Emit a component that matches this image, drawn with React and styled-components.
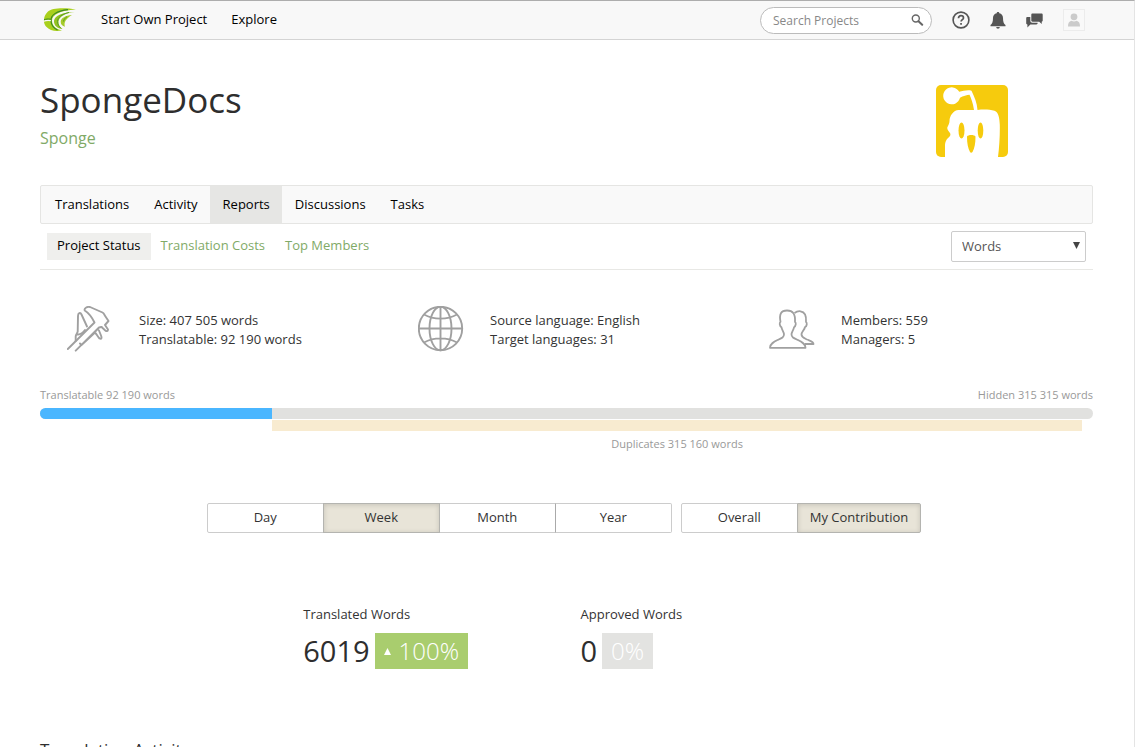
import React, { useState } from 'react'
import styled, { createGlobalStyle } from 'styled-components'

const GlobalStyle = createGlobalStyle`
  * {
    box-sizing: border-box;
  }
  html {
    scrollbar-width: none;
  }
  body {
    margin: 0;
    background: #fff;
    color: #333;
    font-family: "Open Sans", "Noto Sans", sans-serif;
    font-size: 13px;
    line-height: 19px;
  }
  button, input, select {
    font-family: inherit;
  }
  a {
    text-decoration: none;
  }
`

const Page = styled.div`
  border-top: 1px solid #adadad;
  border-right: 1px solid #e4e4e4;
`

const Header = styled.header`
  display: flex;
  align-items: center;
  height: 39px;
  padding: 0 49px 0 43px;
  background: #f8f8f8;
  border-bottom: 1px solid #d4d4d4;
`

const LogoLink = styled.a`
  display: flex;
  margin-right: 25px;
`

const MainNav = styled.nav`
  display: flex;
  flex: 1;
  gap: 24px;
  padding-bottom: 2px;
`

const NavLink = styled.a`
  color: #000;
`

const HeaderTools = styled.div`
  display: flex;
  align-items: center;
  gap: 20px;
`

const SearchBox = styled.form`
  display: flex;
  align-items: center;
  width: 172px;
  height: 27px;
  padding: 0 7px 0 12px;
  background: #fff;
  border: 1px solid #bbb;
  border-radius: 14px;
`

const SearchInput = styled.input`
  flex: 1;
  min-width: 0;
  padding: 0;
  border: 0;
  outline: 0;
  background: none;
  color: #333;
  font-size: 12px;

  &::placeholder {
    color: #888;
  }
`

const IconButton = styled.button`
  display: flex;
  padding: 0;
  border: 0;
  background: none;
  cursor: pointer;
`

const Avatar = styled.button`
  display: flex;
  align-items: center;
  justify-content: center;
  width: 22px;
  height: 22px;
  padding: 0;
  background: #f9f9f9;
  border: 1px solid #ececec;
`

const Main = styled.main`
  padding: 40px 41px 0 40px;
`

const ProjectHead = styled.div`
  display: flex;
  justify-content: space-between;
  align-items: flex-start;
  padding: 5px 85px 28px 0;
`

const ProjectTitle = styled.h1`
  margin: 0;
  padding-top: 2px;
  color: #2e2e2e;
  font-size: 35px;
  font-weight: 500;
  line-height: 26px;
`

const OwnerLink = styled.a`
  display: block;
  padding-top: 13px;
  color: #81aa67;
  font-size: 16px;
  line-height: 24px;
`

const Tabs = styled.nav`
  display: flex;
  height: 39px;
  padding-left: 1px;
  background: #f9f9f9;
  border: 1px solid #e5e5e3;
  border-radius: 2px;
`

const Tab = styled.a`
  padding: 9px 12px 0 13px;
  color: #000;
  background: ${props => (props.$active ? '#e6e6e4' : 'transparent')};
`

const SubBar = styled.div`
  display: flex;
  align-items: center;
  justify-content: space-between;
  height: 46px;
  padding: 0 7px;
  border-bottom: 1px solid #e8e8e5;
`

const SubNav = styled.nav`
  display: flex;
`

const SubLink = styled.a`
  padding: 3px 10px 5px;
  color: ${props => (props.$active ? '#000' : '#81aa67')};
  background: ${props => (props.$active ? '#efefed' : 'transparent')};
`

const SelectWrap = styled.div`
  position: relative;

  svg {
    position: absolute;
    right: 6px;
    top: 11px;
    pointer-events: none;
  }
`

const UnitSelect = styled.select`
  display: block;
  width: 135px;
  height: 31px;
  padding: 0 10px 2px;
  appearance: none;
  background: #fff;
  border: 1px solid #ccc;
  border-radius: 2px;
  color: #555;
  font-size: 13px;
`

const Facts = styled.section`
  display: grid;
  grid-template-columns: repeat(3, 1fr);
  padding-top: 36px;
`

const Fact = styled.div`
  display: flex;
  align-items: center;
  gap: 26px;
  padding-left: 27px;
`

const FactText = styled.div`
  padding-top: 2px;
`

const BarLabels = styled.div`
  display: flex;
  justify-content: space-between;
  padding-top: 35px;
  color: #999;
  font-size: 11px;
  line-height: 16px;
`

const Track = styled.div`
  height: 11px;
  margin-top: 5px;
  overflow: hidden;
  background: #e1e1df;
  border-radius: 6px;
`

const Fill = styled.div`
  height: 100%;
  background: #4ab6ff;
`

const Duplicates = styled.div`
  margin-top: 1px;
  color: #999;
  font-size: 11px;
  line-height: 16px;
  text-align: center;
`

const DuplicatesBar = styled.div`
  height: 11px;
  margin-bottom: 5px;
  background: #f8ebd0;
`

const Toggles = styled.div`
  display: flex;
  justify-content: center;
  gap: 9px;
  padding: 51px 5px 72px 0;
`

const ToggleGroup = styled.div`
  display: flex;
`

const Toggle = styled.button`
  min-width: 117px;
  height: 30px;
  padding: 0 12px 2px;
  border: 1px solid #ccc;
  background: #fff;
  color: #333;
  font-size: 13px;
  cursor: pointer;

  & + & {
    margin-left: -1px;
    border-left-color: #aaa;
  }
  &:first-child {
    border-radius: 2px 0 0 2px;
  }
  &:last-child {
    border-radius: 0 2px 2px 0;
  }
  &[aria-pressed='true'] {
    z-index: 1;
    background: #e8e4d8;
    border-color: #b4b4b0;
    box-shadow: inset 0 1px 5px rgba(0, 0, 0, 0.15);
  }
`

const Metrics = styled.section`
  display: grid;
  grid-template-columns: 1fr 1fr;
  gap: 28px;
  padding: 0 25%;
`

const MetricLabel = styled.div`
  padding-bottom: 9px;
`

const MetricRow = styled.div`
  display: flex;
  align-items: center;
  gap: 5px;
  color: #2e2e2e;
  font-size: 29px;
  line-height: 36px;
`

const Percent = styled.span`
  display: flex;
  align-items: center;
  gap: 8px;
  height: 36px;
  padding: 0 9px;
  background: ${props => (props.$up ? '#a9cd6e' : '#e3e3e1')};
  color: #fff;
  font-size: 24px;
  font-weight: 300;
`

const SectionTitle = styled.h2`
  margin: 0;
  padding-top: 68px;
  color: #2e2e2e;
  font-size: 17px;
  font-weight: 400;
  line-height: 26px;
`

const Logo = () => (
  <svg width="33" height="24" viewBox="0 0 33 24">
    <path d="M33 1.500C22-.4 9-.4 4.500 4 0 8.500 0 15 3 18.500c4 4.600 10 5 16 4-6.500-1.500-10-5-10-10C9 6.500 17 2.500 33 1.500Z" fill="#a9d01c" />
    <path d="M31.500 4C20 4 11.500 7.500 11 13c-.3 4.500 3.500 7.500 8.500 8-3-2.200-4.300-4.700-4-7.500C16 9 22 5 31.500 4Z" fill="#93c120" />
    <path d="M29 7c-6.500.5-11 3-11.300 6.500-.2 2.800 1.800 4.800 4.300 5.200-1.500-4.200 1-8.200 7-11.700Z" fill="#a5cb2a" />
    <path d="M8 13C7.500 7 14 2.800 25 1.600M8 13c.3 4 2.500 7 6.500 9" fill="none" stroke="#3c8a24" strokeWidth="1.200" />
    <path d="M14.500 13.500C14.500 9.500 19 6 26 4.400M14.500 13.500c0 2.800 1.500 5 3.500 6.800M20.500 13.500c.2-2 1.500-3.500 3.500-4.800" fill="none" stroke="#5a9f26" strokeWidth="1" />
    <path d="M.8 13.200c2-.8 4.500-1 7-.6" fill="none" stroke="#f8f8f8" strokeWidth="1.400" />
    <path d="M1 11.800c2-.8 4-1 6.500-.6" fill="none" stroke="#3c8a24" strokeWidth="1" />
  </svg>
)

const SearchIcon = () => (
  <svg width="13" height="12" viewBox="0 0 13 12" fill="none" stroke="#666">
    <circle cx="4.800" cy="4.500" r="3.500" strokeWidth="1.400" />
    <path d="m7.500 7.200 3.700 3.500" strokeWidth="2" strokeLinecap="round" />
  </svg>
)

const HelpIcon = () => (
  <svg width="18" height="18" viewBox="0 0 18 18" fill="none" stroke="#555">
    <circle cx="9" cy="9" r="7.900" strokeWidth="1.600" />
    <path d="M6.500 7.200C6.500 5.600 7.500 4.700 9 4.700s2.500.9 2.500 2.200c0 1.800-2.400 1.800-2.400 3.700" strokeWidth="1.700" />
    <path d="M8.200 12h1.700v1.700H8.200z" fill="#555" stroke="none" />
  </svg>
)

const BellIcon = () => (
  <svg width="16" height="17" viewBox="0 0 16 17" fill="#555">
    <path d="M8 0c-.8 0-1.300.5-1.300 1.200C4.300 1.700 3 3.500 3 6c0 4-.8 5.600-2.500 7v1.200h15V13C13.800 11.600 13 10 13 6c0-2.500-1.300-4.300-3.700-4.800C9.300.5 8.800 0 8 0ZM6.200 15a1.800 1.800 0 0 0 3.600 0Z" />
  </svg>
)

const ChatIcon = () => (
  <svg width="17" height="15" viewBox="0 0 17 15" fill="#555">
    <path d="M6.500.4h9c.7 0 1.200.5 1.200 1.200v6c0 .7-.4 1.200-1 1.200l.1 2.200-2.600-2.200H6.500c-.7 0-1.200-.5-1.200-1.200v-6C5.300.9 5.800.4 6.500.4Z" />
    <path d="M4.300 4H1.400C.7 4 .2 4.500.2 5.200v5c0 .7.5 1.200 1.200 1.200v3l3-3h6c.7 0 1.200-.5 1.200-1.200v-.4H6.300c-1.200 0-2-.8-2-2Z" />
  </svg>
)

const PersonIcon = () => (
  <svg width="14" height="14" viewBox="0 0 14 14" fill="#cbcbcb">
    <circle cx="7" cy="3.800" r="3.400" />
    <path d="M1 13.500c0-3.500 1-5 3.500-5.700 1.500.9 3.500.9 5 0 2.500.7 3.500 2.200 3.500 5.700Z" />
  </svg>
)

const ProjectLogo = () => (
  <svg width="72" height="72" viewBox="0 0 72 72" role="img" aria-label="Sponge">
    <rect width="72" height="72" rx="5" fill="#f6cb0d" />
    <path d="M9 72V60c.2-3 1-5 3-7 2-1.500 3-3 2-5-1-2-3.500-3.500-2.500-6 1-2 2-4 2-6 0-5 4-11 9-11h15.500C37 18 35 13 33.500 9.800 31 10 27 11 24 12.800a8.500 8.500 0 1 1-.8-6C27 6 32 4.500 35.500 5.800 38.500 12 41 18 41.500 25c6-.8 12-.6 17 .8 4 1.200 5 7.200 5.300 14.200.2 10-.5 22-1.800 32Z" fill="#fff" />
    <ellipse cx="25.500" cy="45.500" rx="3" ry="8" fill="#f6cb0d" />
    <ellipse cx="44.500" cy="45.500" rx="2.800" ry="8" fill="#f6cb0d" />
    <path d="M31 51.500c1-2 7.500-2 8.500 0 0 7-1 12-3 15.500-.7 1-2 1-2.500 0-2-3.500-3-8.500-3-15.500Z" fill="#f6cb0d" />
  </svg>
)

const CaliperIcon = () => (
  <svg width="46" height="46" viewBox="0 0 46 46" fill="none" stroke="#a0a0a0" strokeWidth="1.900" strokeLinejoin="round" strokeLinecap="round">
    <path d="M.8 43 27.500 16.500C25 11.500 21 6.500 17.800 4.500c-1-2.300 2.200-4 5.200-3.500l12.500 5.500c1.500.8 2 2.500 3 4l3 4.500-3.500 4 3 4.500c0 2-1.500 2-2.700 1l-3.800-3.500" />
    <path d="M8.700 44.700 32 21.500l2.500-.5M14.500 39 31 22.800M14.500 39l-1.500-1.500M14.500 39l13.500-12.500c1.500 1.500 2.500 4 4.500 6 2 1 2.500-.5 1.500-3l-2-5" />
    <path d="M8.700 35v-4.500c0-2 1.500-2.700 2-5l.3-15.500c0-3 2.300-4 3.500-1.500L20 20.500" />
    <path d="M10.500 28.500c3 .3 5-1 7.500-4.500" />
  </svg>
)

const GlobeIcon = () => (
  <svg width="46" height="46" viewBox="0 0 46 46" fill="none" stroke="#a0a0a0" strokeWidth="1.900">
    <circle cx="22.500" cy="22.500" r="21.700" />
    <ellipse cx="22.500" cy="22.500" rx="11" ry="21.700" />
    <path d="M22.500 1v43M1 22.500h43M6 8.500c9.500 5.500 23.500 5.500 33 0M6 36.500c9.500-5.500 23.500-5.500 33 0" />
  </svg>
)

const MembersIcon = () => (
  <svg width="46" height="46" viewBox="0 0 46 46" fill="none" stroke="#a0a0a0" strokeWidth="1.800" strokeLinejoin="round">
    <path d="M1 41.800c0-4 4-6 8-8 4-1.700 6-2.500 6-5.500 0-2-2-4-2.500-7-2-1-2.300-4.800-1-5.300C10 8 12 4.500 18 4.500S26.500 8 26 16c1.300.5 1 4.300-1 5.300-.5 3-2.500 5-2.500 7 0 3 2 3.800 6 5.500 4 2 8 4 8 8Z" />
    <path d="M25.500 7c2-1.500 4-2 6-1.700 5 .7 6 5 5.500 10.700 1.300.5 1 4.500-1 5-.5 3-3.500 5-3.500 7.500 0 3 2.500 3.500 5.500 5 3.500 1.500 6.500 2 6.500 4.500h-9" />
  </svg>
)

const tabs = ['Translations', 'Activity', 'Reports', 'Discussions', 'Tasks']
const reports = ['Project Status', 'Translation Costs', 'Top Members']

const facts = [
  { icon: <CaliperIcon />, lines: ['Size: 407 505 words', 'Translatable: 92 190 words'] },
  { icon: <GlobeIcon />, lines: ['Source language: English', 'Target languages: 31'] },
  { icon: <MembersIcon />, lines: ['Members: 559', 'Managers: 5'] },
]

const share = { translatable: 22, duplicates: 77 }

const Segmented = ({ label, options, initial }) => {
  const [value, setValue] = useState(initial)
  return (
    <ToggleGroup role="group" aria-label={label}>
      {options.map(option => (
        <Toggle key={option} type="button" aria-pressed={option === value} onClick={() => setValue(option)}>
          {option}
        </Toggle>
      ))}
    </ToggleGroup>
  )
}

const App = () => {
  return (
    <>
      <GlobalStyle />
      <Page>
        <Header>
          <LogoLink href="#" aria-label="Home"><Logo /></LogoLink>
          <MainNav>
            <NavLink href="#">Start Own Project</NavLink>
            <NavLink href="#">Explore</NavLink>
          </MainNav>
          <HeaderTools>
            <SearchBox role="search" onSubmit={e => e.preventDefault()}>
              <SearchInput type="text" placeholder="Search Projects" aria-label="Search Projects" />
              <IconButton type="submit" aria-label="Search"><SearchIcon /></IconButton>
            </SearchBox>
            <IconButton type="button" aria-label="Help"><HelpIcon /></IconButton>
            <IconButton type="button" aria-label="Notifications"><BellIcon /></IconButton>
            <IconButton type="button" aria-label="Messages"><ChatIcon /></IconButton>
            <Avatar type="button" aria-label="Profile"><PersonIcon /></Avatar>
          </HeaderTools>
        </Header>

        <Main>
          <ProjectHead>
            <div>
              <ProjectTitle>SpongeDocs</ProjectTitle>
              <OwnerLink href="#">Sponge</OwnerLink>
            </div>
            <ProjectLogo />
          </ProjectHead>

          <Tabs>
            {tabs.map(tab => (
              <Tab key={tab} href="#" $active={tab === 'Reports'}>{tab}</Tab>
            ))}
          </Tabs>

          <SubBar>
            <SubNav>
              {reports.map(report => (
                <SubLink key={report} href="#" $active={report === 'Project Status'}>{report}</SubLink>
              ))}
            </SubNav>
            <SelectWrap>
              <UnitSelect aria-label="Unit" defaultValue="Words">
                <option>Words</option>
              </UnitSelect>
              <svg width="7" height="7" viewBox="0 0 7 7"><path d="M0 0h7L3.500 7Z" fill="#444" /></svg>
            </SelectWrap>
          </SubBar>

          <Facts>
            {facts.map(fact => (
              <Fact key={fact.lines[0]}>
                {fact.icon}
                <FactText>
                  {fact.lines.map(line => <div key={line}>{line}</div>)}
                </FactText>
              </Fact>
            ))}
          </Facts>

          <BarLabels>
            <span>Translatable 92 190 words</span>
            <span>Hidden 315 315 words</span>
          </BarLabels>
          <Track>
            <Fill style={{ width: `${share.translatable}%` }} />
          </Track>
          <Duplicates style={{ marginLeft: `${share.translatable}%`, width: `${share.duplicates}%` }}>
            <DuplicatesBar />
            Duplicates 315 160 words
          </Duplicates>

          <Toggles>
            <Segmented label="Period" options={['Day', 'Week', 'Month', 'Year']} initial="Week" />
            <Segmented label="Scope" options={['Overall', 'My Contribution']} initial="My Contribution" />
          </Toggles>

          <Metrics>
            <div>
              <MetricLabel>Translated Words</MetricLabel>
              <MetricRow>
                6019
                <Percent $up>
                  <svg width="7" height="7" viewBox="0 0 7 7"><path d="M0 7h7L3.500 0Z" fill="#fff" /></svg>
                  100%
                </Percent>
              </MetricRow>
            </div>
            <div>
              <MetricLabel>Approved Words</MetricLabel>
              <MetricRow>
                0
                <Percent>0%</Percent>
              </MetricRow>
            </div>
          </Metrics>

          <SectionTitle>Translation Activity</SectionTitle>
        </Main>
      </Page>
    </>
  )
}

export default App
